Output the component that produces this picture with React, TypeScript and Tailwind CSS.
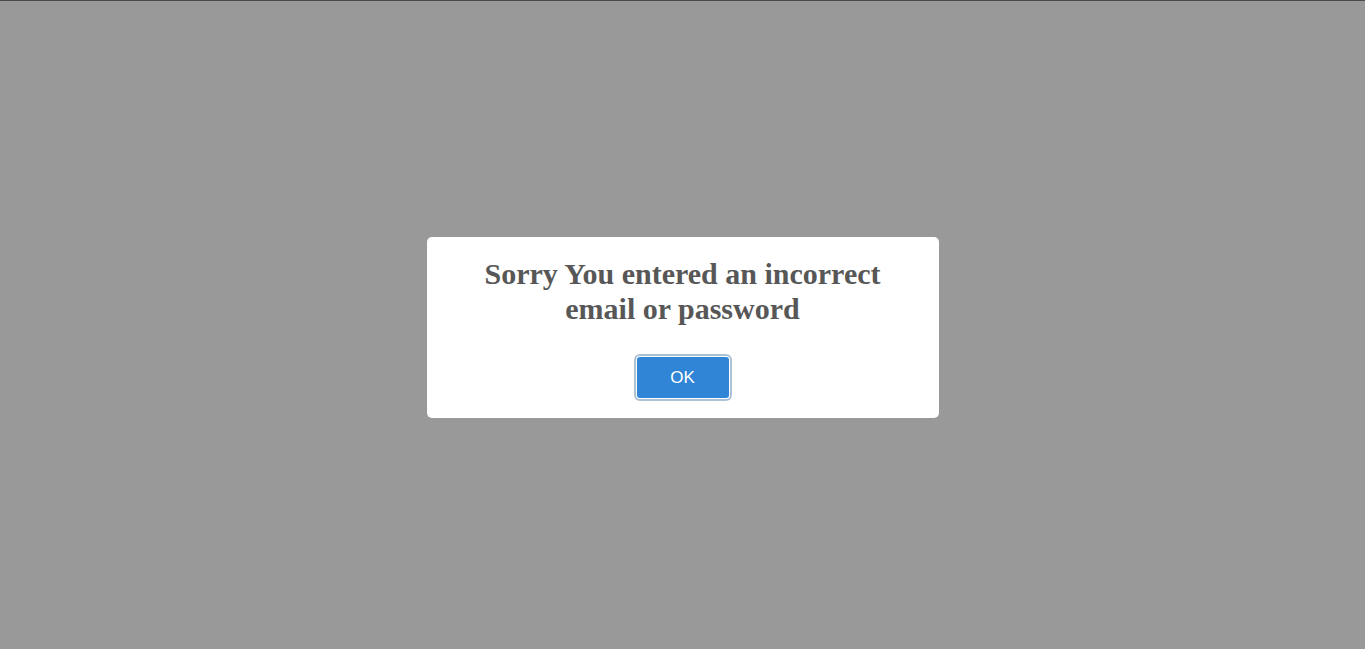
export default function App() {
  return (
    <div className="w-full h-[649px] bg-[#999999] border-t border-[#4a4a4a] flex items-start justify-center">
      <div className="mt-[236px] w-[512px] bg-white rounded-[5px] px-5 pt-5 pb-5 flex flex-col items-center">
        <h2
          className="text-[30px] leading-[34.5px] font-bold text-[#575757] text-center w-[420px]"
          style={{ fontFamily: '"Liberation Serif", "Times New Roman", serif' }}
        >
          Sorry You entered an incorrect email or password
        </h2>
        <button
          className="mt-[31px] w-[92px] h-[41px] rounded-[3px] bg-[#3085d6] text-white text-[17px] shadow-[0_0_0_1px_#fff,0_0_0_3px_rgba(50,100,150,0.4)]"
          style={{ fontFamily: '"Liberation Sans", Arial, sans-serif' }}
        >
          OK
        </button>
      </div>
    </div>
  );
}
